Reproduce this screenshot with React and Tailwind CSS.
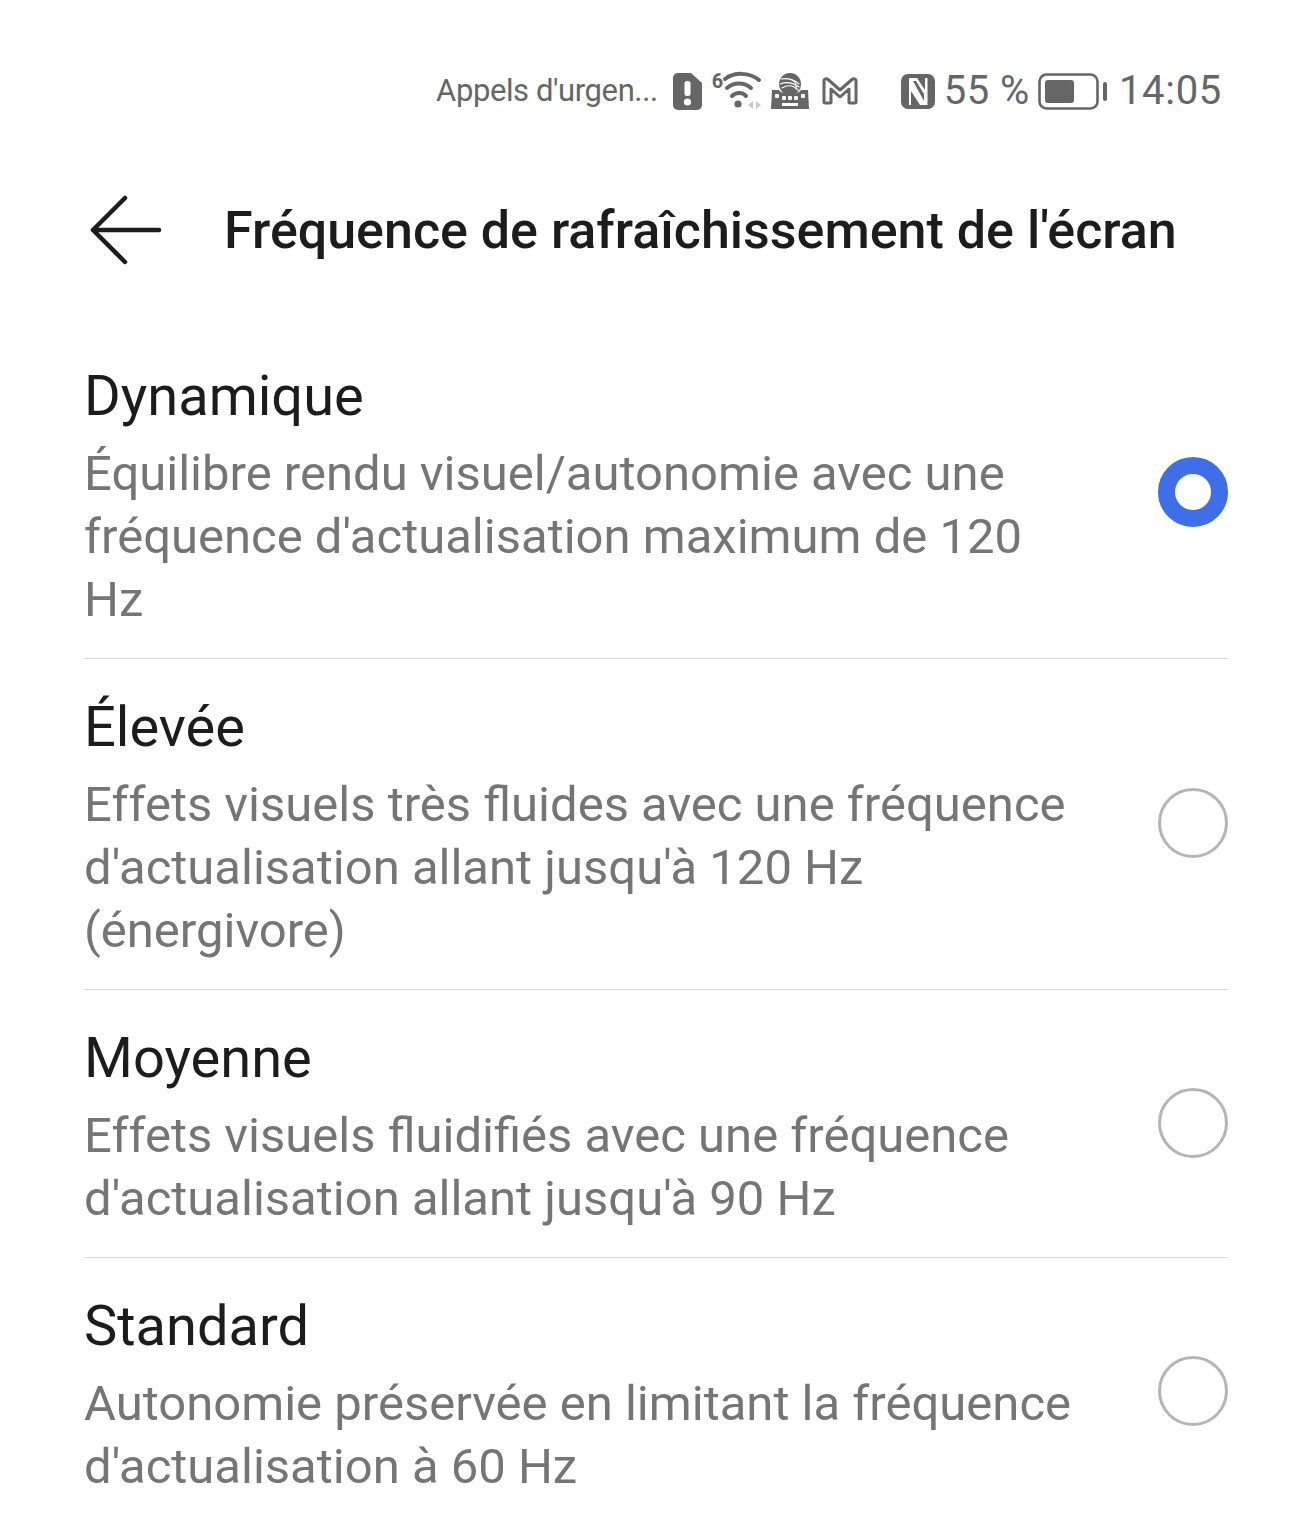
import React from "react";

const options = [
  {
    title: "Dynamique",
    lines: ["Équilibre rendu visuel/autonomie avec une", "fréquence d'actualisation maximum de 120", "Hz"],
    selected: true,
  },
  {
    title: "Élevée",
    lines: ["Effets visuels très fluides avec une fréquence", "d'actualisation allant jusqu'à 120 Hz", "(énergivore)"],
  },
  {
    title: "Moyenne",
    lines: ["Effets visuels fluidifiés avec une fréquence", "d'actualisation allant jusqu'à 90 Hz"],
  },
  {
    title: "Standard",
    lines: ["Autonomie préservée en limitant la fréquence", "d'actualisation à 60 Hz"],
  },
];

function SimIcon() {
  return (
    <svg width="29" height="37" viewBox="0 0 29 37">
      <path d="M5 0h13l11 10v22a5 5 0 0 1-5 5H5a5 5 0 0 1-5-5V5a5 5 0 0 1 5-5z" fill="#666" />
      <rect x="11.5" y="8" width="6" height="15" rx="2.5" fill="#fff" />
      <circle cx="14.5" cy="29" r="3.6" fill="#fff" />
    </svg>
  );
}

function WifiIcon() {
  return (
    <div className="relative">
      <svg width="50" height="42" viewBox="0 0 50 42" className="block">
        <g fill="none" stroke="#666" strokeWidth="4" strokeLinecap="round">
          <path d="M13 9C22 2 37 2 47 10" />
          <path d="M15 18c7-6 17-6 24 0" />
          <path d="M20 26c4-4 11-4 14 0" />
        </g>
        <circle cx="26" cy="34" r="3.6" fill="#666" />
        <path d="M41 31v8l-5-4zM44 31v8l5-4z" fill="#c8c8c8" />
      </svg>
      <span className="absolute left-0 top-[1px] text-[20px] leading-none font-bold">6</span>
    </div>
  );
}

function KeyboardIcon() {
  return (
    <svg width="38" height="36" viewBox="0 0 38 36">
      <path d="M1 17h7c3 5 19 5 22 0h7l1 19H0z" fill="#666" />
      <circle cx="19" cy="11" r="11" fill="#666" />
      <g fill="none" stroke="#fff" strokeWidth="1.1" strokeLinecap="round">
        <path d="M10 6c6-1 12 0 18 5" />
        <path d="M9 11c5-2 12-2 19 3" />
        <path d="M11 15c5-3 11-3 16 2" />
        <path d="M21 7c3 1 5 5 4 9" />
      </g>
      <g fill="#fff">
        <rect x="4" y="21" width="4" height="4" rx="1" />
        <rect x="11" y="23" width="4" height="4" rx="1" />
        <rect x="17" y="23" width="4" height="4" rx="1" />
        <rect x="23" y="23" width="4" height="4" rx="1" />
        <rect x="30" y="21" width="4" height="4" rx="1" />
        <rect x="11" y="30" width="16" height="3" />
      </g>
    </svg>
  );
}

function MailIcon() {
  return (
    <svg width="36" height="28" viewBox="0 0 36 28">
      <path
        d="M2 25V4c0-2 2-3 4-1.500L18 13 30 2.500C32 1 34 2 34 4v21c0 .6-.4 1-1 1h-5c-.6 0-1-.4-1-1V12l-9 8-9-8v13c0 .6-.4 1-1 1H3c-.6 0-1-.4-1-1z"
        fill="none"
        stroke="#666"
        strokeWidth="3"
        strokeLinejoin="round"
      />
    </svg>
  );
}

function NfcIcon() {
  return (
    <svg width="34" height="35" viewBox="0 0 34 35">
      <rect width="34" height="35" rx="7" fill="#666" />
      <path d="M8 4h8l8 12V4h2.500v27H19L10 17v14H8z" fill="#fff" />
      <path d="M12 7h3l8 13v7z" fill="#666" />
    </svg>
  );
}

function BatteryIcon() {
  return (
    <svg width="69" height="37" viewBox="0 0 69 37">
      <rect x="1.500" y="1.500" width="58" height="34" rx="7" fill="none" stroke="#666" strokeWidth="2.600" />
      <rect x="7" y="7" width="29" height="23" rx="3" fill="#666" />
      <rect x="65" y="9" width="4" height="19" rx="2" fill="#666" />
    </svg>
  );
}

function StatusBar() {
  return (
    <div className="flex h-[180px] pt-[2px] items-center justify-end pr-[90px] text-[#666666]">
      <span className="text-[31px] tracking-[-0.4px] mr-[15px]">Appels d'urgen...</span>
      <SimIcon />
      <div className="ml-[10px]"><WifiIcon /></div>
      <div className="ml-[9px]"><KeyboardIcon /></div>
      <div className="ml-[13px]"><MailIcon /></div>
      <div className="ml-[43px]"><NfcIcon /></div>
      <span className="ml-[9px] text-[40px] tracking-[0.5px]">55 %</span>
      <div className="ml-[8px]"><BatteryIcon /></div>
      <span className="ml-[12px] text-[40px] tracking-[0.7px]">14:05</span>
    </div>
  );
}

function Radio({ selected }) {
  if (selected) {
    return (
      <div className="w-[70px] h-[70px] mb-[2px] shrink-0 rounded-full border-[17px] border-[#3f6fe8]" />
    );
  }
  return <div className="w-[70px] h-[70px] mb-[2px] shrink-0 rounded-full border-[3px] border-[#b5b5b5]" />;
}

function OptionRow({ option, last }) {
  return (
    <div className={`flex items-center justify-between ${last ? "" : "border-b border-[#d9d9d9]"}`}>
      <div className="pt-[32px] pb-[27px]">
        <div className="text-[56px] leading-[72px] text-[#1c1c1c]">{option.title}</div>
        <div className="mt-[10px] text-[49px] leading-[63px] text-[#757575]">
          {option.lines.map((line) => (
            <div key={line} className="whitespace-nowrap">{line}</div>
          ))}
        </div>
      </div>
      <Radio selected={option.selected} />
    </div>
  );
}

export default function App() {
  return (
    <div className="w-[1312px] h-[1523px] overflow-hidden bg-white font-['Roboto',sans-serif]">
      <StatusBar />
      <div className="flex items-center h-[100px] pl-[90px]">
        <svg width="72" height="70" viewBox="0 0 72 70" fill="none" stroke="#1c1c1c" strokeWidth="4.500" strokeLinecap="round" strokeLinejoin="round">
          <path d="M35 3L3 35l32 32M3 35h66" />
        </svg>
        <h1 className="ml-[62px] mt-[2px] text-[52px] font-medium text-[#1c1c1c] whitespace-nowrap">
          Fréquence de rafraîchissement de l'écran
        </h1>
      </div>
      <div className="mt-[48px] mx-[84px]">
        {options.map((option, i) => (
          <OptionRow key={option.title} option={option} last={i === options.length - 1} />
        ))}
      </div>
    </div>
  );
}
